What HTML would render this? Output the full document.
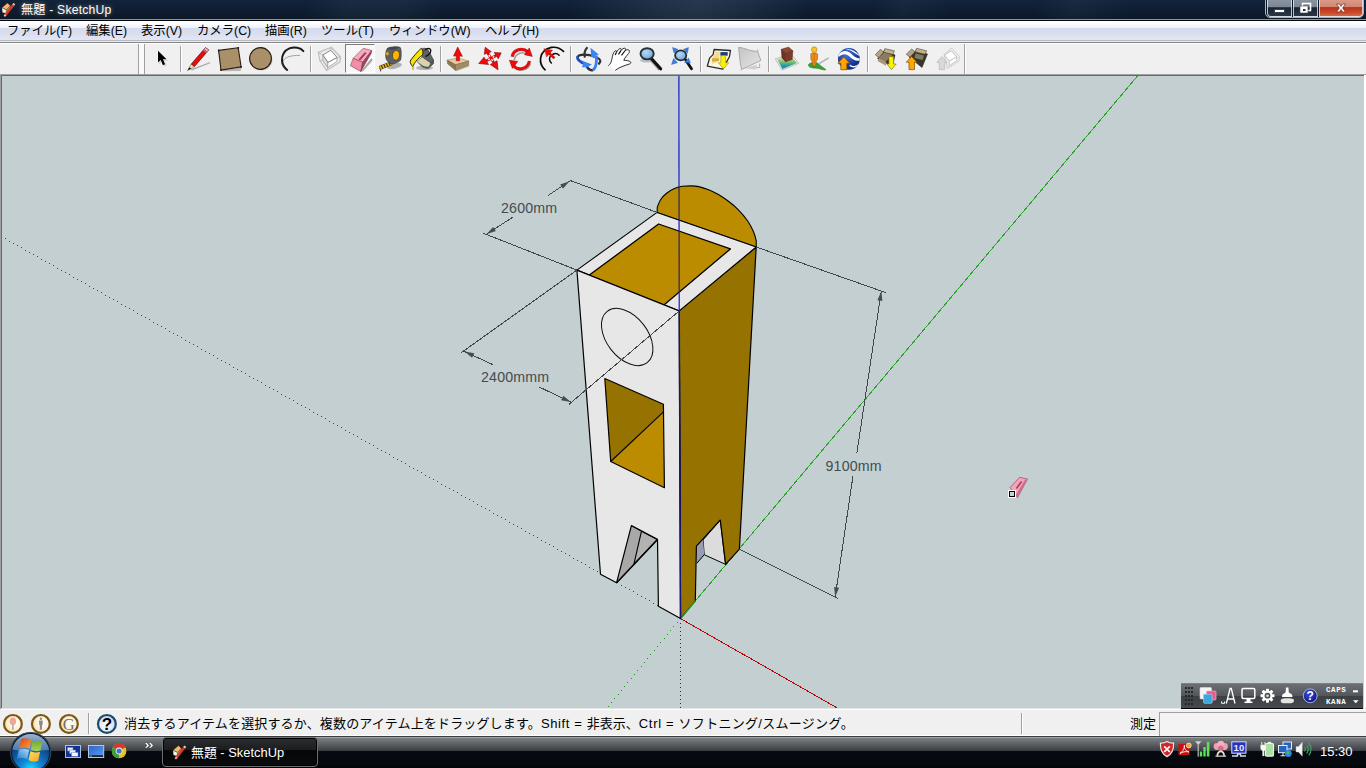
<!DOCTYPE html>
<html lang="ja">
<head>
<meta charset="utf-8">
<title>無題 - SketchUp</title>
<style>
*{box-sizing:border-box;margin:0;padding:0}
html,body{width:1366px;height:768px;overflow:hidden;background:#f0f0f0}
body{position:relative;font-family:"Liberation Sans","Noto Sans CJK JP",sans-serif;font-size:12px;color:#000}
.abs{position:absolute}
/* title bar */
#title{left:0;top:0;width:1366px;height:19px;background:
 linear-gradient(100deg,rgba(140,165,190,0) 300px,rgba(140,165,190,.07) 345px,rgba(140,165,190,.07) 395px,rgba(140,165,190,0) 440px,rgba(140,165,190,0) 560px,rgba(140,165,190,.13) 650px,rgba(140,165,190,.17) 690px,rgba(140,165,190,.10) 740px,rgba(140,165,190,0) 800px,rgba(140,165,190,0) 860px,rgba(140,165,190,.06) 890px,rgba(140,165,190,0) 940px,rgba(140,165,190,0) 1020px,rgba(140,165,190,.06) 1060px,rgba(140,165,190,0) 1120px),
 linear-gradient(180deg,#12233a 0,#0e1d31 55%,#0b1828 100%)}
#tline1{left:0;top:19px;width:1366px;height:1px;background:#8593a0}
#tline2{left:0;top:20px;width:1366px;height:1px;background:#05090e}
#ttext{left:21px;top:1px;height:19px;line-height:18px;font-size:12.2px;letter-spacing:.18px;color:#fff;white-space:nowrap;text-shadow:0 0 4px rgba(255,255,255,.55),0 0 2px rgba(0,0,0,.8)}
/* caption buttons */
#capwrap{left:1265px;top:-3px;width:99px;height:21px;border:1px solid #aab4c0;border-radius:0 0 5px 5px;background:#0c1826}
.cap{position:absolute;top:0;height:19px;border:1px solid rgba(235,240,248,.75);border-top:none}
#bmin{left:1px;width:25px;border-radius:0 0 0 4px;background:linear-gradient(180deg,#8b97a3 0,#7c8794 52%,#1a2433 53%,#2a3546 100%)}
#bmax{left:27px;width:25px;background:linear-gradient(180deg,#8b97a3 0,#7c8794 52%,#1a2433 53%,#2a3546 100%)}
#bcls{left:53px;width:44px;border-radius:0 0 4px 0;background:linear-gradient(180deg,#dba090 0,#d48573 50%,#b8341a 53%,#c9482a 80%,#d2694a 100%)}
/* menu */
#menu{left:0;top:21px;width:1366px;height:19px;background:linear-gradient(180deg,#ffffff 0,#fdfdff 2px,#eef1fa 7px,#d5daec 7.5px,#d9deef 12px,#e2e6f5 100%)}
#mline1{left:0;top:40px;width:1366px;height:1px;background:#b8bac2}
#mline0{left:0;top:41px;width:1366px;height:1px;background:#ececec}
#mline2{left:0;top:42px;width:1366px;height:1px;background:#858585}
#mline3{left:0;top:43px;width:1366px;height:1px;background:#ffffff}
.mi{position:absolute;top:1px;height:19px;line-height:19px;font-size:12.35px;white-space:nowrap;color:#000}
/* toolbar */
#tb{left:0;top:44px;width:1366px;height:30px;background:#f0f0f0}
.sep{position:absolute;top:5px;width:2px;height:24px;border-left:1px solid #a0a0a0;border-right:1px solid #fff}
.ic{position:absolute;top:3px;width:26px;height:26px}
/* viewport */
#vb1{left:0;top:74px;width:1366px;height:1px;background:#a0a0a0}
#vb2{left:1px;top:75px;width:1364px;height:1px;background:#696969}
#vbl1{left:0;top:74px;width:1px;height:635px;background:#a0a0a0}
#vbl2{left:1px;top:75px;width:1px;height:633px;background:#696969}
#vp{left:2px;top:76px;width:1362px;height:632px;background:#c4cfd1;overflow:hidden}
#vbr{left:1364px;top:75px;width:2px;height:636px;background:#fff}
#vbb{left:1px;top:708px;width:1365px;height:2px;background:linear-gradient(180deg,#e3e3e3 0,#e3e3e3 1px,#fff 1px,#fff 2px)}
/* status */
#status{left:0;top:710px;width:1366px;height:26px;background:#f0f0f0;border-bottom:1px solid #fff}
#stext{left:124px;top:714px;height:20px;line-height:20px;font-size:13px;white-space:nowrap;color:#000}
#mlabel{left:1130px;top:714px;height:20px;line-height:20px;font-size:13px;white-space:nowrap}
#mbox{left:1159px;top:712px;width:207px;height:24px;border-left:1px solid #a0a0a0;border-top:1px solid #a0a0a0;background:#f3f3f3}
.ssep{position:absolute;top:713px;width:2px;height:21px;border-left:1px solid #a0a0a0;border-right:1px solid #fff}
/* taskbar */
#task{left:0;top:736px;width:1366px;height:32px;background:linear-gradient(180deg,#3a3d40 0,#3a3d40 1px,#a2a5a8 1px,#a2a5a8 2px,#7c7f82 2px,#62666a 7px,#393d41 15px,#070b11 15px,#05080d 28px,#010203 100%)}
#tbtn{left:162px;top:737px;width:156px;height:30px;border:1px solid #6d7174;border-radius:4px;background:linear-gradient(180deg,#2b2e31 0,#1b1d20 42%,#050608 45%,#0a0b0d 100%);box-shadow:inset 0 0 0 1px #000}
#tbtxt{left:191px;top:743px;height:20px;line-height:20px;font-size:12.9px;color:#fff;white-space:nowrap}
#clock{left:1320px;top:742px;height:20px;line-height:20px;font-size:13px;color:#fff;white-space:nowrap}
#chev{left:144px;top:737px;font-size:12px;line-height:14px;color:#fff;font-weight:bold;letter-spacing:-1px}
/* language bar */
#lang{left:1181px;top:683px;width:182px;height:26px;border-top:1px solid #7d8083;border-bottom:1px solid #000;background:linear-gradient(180deg,#6c7074 0,#54585c 48%,#3c4043 50%,#46494d 100%)}
.lt{position:absolute;left:145px;font-size:7.5px;line-height:8px;color:#fff;font-weight:bold;letter-spacing:.6px;font-family:"Liberation Mono","DejaVu Sans Mono",monospace}
</style>
</head>
<body>
<!-- TITLE BAR -->
<div id="title" class="abs"></div>
<div id="tline1" class="abs"></div>
<div id="tline2" class="abs"></div>
<svg class="abs" style="left:0;top:0" width="18" height="19" viewBox="0 0 18 19">
 <polygon points="1.9,7.6 7.4,3 10.4,5.6 6.5,9.9" fill="#f3b877" stroke="#1a1410" stroke-width=".5"/>
 <polygon points="1.9,7.6 6.5,9.9 6,13.6 2.3,12.5" fill="#f5f3ee" stroke="#2a2420" stroke-width=".4"/>
 <polygon points="6.5,9.9 10.4,5.6 10.2,8.6 6,13.6" fill="#c98a58"/>
 <path d="M13.700 4.4 L5.300 15.1" stroke="#d53c25" stroke-width="2.5" fill="none"/>
 <path d="M14.300 3.6 L13.300 4.9" stroke="#f6d8d0" stroke-width="2.3" fill="none"/>
 <path d="M5.700 14.6 L4.300 16.3" stroke="#f3b3a3" stroke-width="1.9" fill="none"/>
</svg>
<div id="ttext" class="abs">無題 - SketchUp</div>
<div id="capwrap" class="abs">
 <div id="bmin" class="cap"></div><div id="bmax" class="cap"></div><div id="bcls" class="cap"></div>
</div>
<svg class="abs" style="left:1265px;top:0" width="99" height="18" viewBox="0 0 99 18">
 <rect x="9.5" y="9.5" width="10" height="3" fill="#fff" stroke="#3a4350" stroke-width="1"/>
 <rect x="37.5" y="3.5" width="8" height="7" fill="none" stroke="#fff" stroke-width="1.6"/>
 <rect x="35" y="6" width="8" height="7" fill="#fff" stroke="#3a4350" stroke-width=".6"/>
 <rect x="38" y="9" width="2.5" height="2" fill="#26303f"/>
 <path d="M71.500 4 L74.500 4 L76 6.5 L77.500 4 L80.500 4 L77.600 8 L80.500 12 L77.500 12 L76 9.5 L74.500 12 L71.500 12 L74.400 8 Z" fill="#fff" stroke="#6b2a1d" stroke-width=".7"/>
</svg>

<!-- MENU BAR -->
<div id="menu" class="abs">
 <span class="mi" style="left:7px">ファイル(F)</span>
 <span class="mi" style="left:86px">編集(E)</span>
 <span class="mi" style="left:141px">表示(V)</span>
 <span class="mi" style="left:197px">カメラ(C)</span>
 <span class="mi" style="left:265px">描画(R)</span>
 <span class="mi" style="left:321px">ツール(T)</span>
 <span class="mi" style="left:389px">ウィンドウ(W)</span>
 <span class="mi" style="left:485px">ヘルプ(H)</span>
</div>
<div id="mline1" class="abs"></div><div id="mline0" class="abs"></div><div id="mline2" class="abs"></div><div id="mline3" class="abs"></div>

<!-- TOOLBAR -->
<div id="tb" class="abs">
<div style="position:absolute;left:138px;top:0;width:1px;height:30px;background:#a0a0a0"></div>
<div style="position:absolute;left:139px;top:0;width:5px;height:30px;background:#f9f9f9"></div>
<div style="position:absolute;left:144px;top:0;width:1px;height:30px;background:#a0a0a0"></div>
<div class="sep" style="left:180px;top:2px;height:26px"></div>
<div class="sep" style="left:310px;top:2px;height:26px"></div>
<div class="sep" style="left:440px;top:2px;height:26px"></div>
<div class="sep" style="left:570px;top:2px;height:26px"></div>
<div class="sep" style="left:700px;top:2px;height:26px"></div>
<div class="sep" style="left:768px;top:2px;height:26px"></div>
<div class="sep" style="left:867px;top:2px;height:26px"></div>
<div class="sep" style="left:964px;top:0;height:30px"></div>
<div style="position:absolute;left:345px;top:0;width:30px;height:29px;border-left:1px solid #7c7c7c;border-top:1px solid #7c7c7c;border-right:1px solid #fff;border-bottom:1px solid #fff;background:
 repeating-conic-gradient(#ffffff 0 25%,#f0f0f0 0 50%) 0 0/2px 2px"></div>
<svg style="position:absolute;left:0;top:0" width="1366" height="30" viewBox="0 44 1366 30">
<defs>
 <linearGradient id="gTer" x1="0" y1="0" x2="1" y2="1"><stop offset="0" stop-color="#c4c4c4"/><stop offset="1" stop-color="#e6e6e6"/></linearGradient>
 <radialGradient id="gLens" cx=".4" cy=".35" r=".7"><stop offset="0" stop-color="#b8d8f4"/><stop offset="1" stop-color="#6fa4d8"/></radialGradient>
 <radialGradient id="gGE" cx=".4" cy=".3" r=".8"><stop offset="0" stop-color="#4a74d8"/><stop offset=".6" stop-color="#1a3a9c"/><stop offset="1" stop-color="#0d2470"/></radialGradient>
 <linearGradient id="gPhoto" x1="0" y1="0" x2="0" y2="1"><stop offset="0" stop-color="#f0e8c0"/><stop offset=".45" stop-color="#8ac070"/><stop offset=".75" stop-color="#20a0a0"/><stop offset="1" stop-color="#3070d0"/></linearGradient>
</defs>
<!-- 1 select -->
<g id="i-select">
 <path d="M159.200 52.3 L159.200 64.3 L162 61.7 L164.200 66.5 L166.600 65.5 L164.400 60.8 L168.200 60.8 Z" fill="#bdbdbd" opacity=".7"/>
 <path d="M158 50.8 L158 62.6 L160.700 60.1 L162.900 65.3 L165.100 64.3 L163 59.3 L166.600 59.3 Z" fill="#000" stroke="#fff" stroke-width="1" stroke-linejoin="round" paint-order="stroke"/>
</g>
<!-- 2 pencil -->
<g id="i-pencil">
 <path d="M190 69.5 L210 62 L210.300 63.2 L192 70.5 Z" fill="#9a9a9a" opacity=".75"/>
 <path d="M205.400 47.6 L208.800 50 L194.400 66.7 L191 64.3 Z" fill="#e0100c" stroke="#5a0a08" stroke-width=".6"/>
 <path d="M205.400 47.6 L208.800 50 L207.200 51.9 L203.800 49.5 Z" fill="#f7a8cc" stroke="#8a4868" stroke-width=".5"/>
 <path d="M203.800 49.5 L207.200 51.9 L206.300 53 L202.900 50.6 Z" fill="#8a8a7a"/>
 <path d="M191 64.3 L194.400 66.7 L187.600 70.5 Z" fill="#f0e2b4" stroke="#3a3020" stroke-width=".4"/>
 <path d="M187.600 70.5 L189.400 67.2 L191.200 68.5 Z" fill="#111"/>
</g>
<!-- 3 rectangle -->
<g id="i-rect">
 <path d="M222 70.6 L241.800 67.6 L240.500 71 L223 71.3 Z" fill="#9c9c9c" opacity=".7"/>
 <path d="M218.600 50.4 L238.200 47.7 L241.100 66.9 L221 70.1 Z" fill="#aa9069" stroke="#2c2118" stroke-width="1.1" stroke-linejoin="round"/>
 <circle cx="218.7" cy="50.5" r=".9" fill="#1a1410"/><circle cx="238.3" cy="47.8" r=".9" fill="#1a1410"/><circle cx="241.1" cy="66.9" r=".9" fill="#1a1410"/><circle cx="221" cy="70" r=".9" fill="#1a1410"/>
</g>
<!-- 4 circle -->
<g id="i-circle">
 <ellipse cx="261.4" cy="59.4" rx="11" ry="11" fill="#a8a8a8" opacity=".6"/>
 <circle cx="260.5" cy="58.5" r="10.9" fill="#aa9069" stroke="#241a12" stroke-width="1.1"/>
</g>
<!-- 5 arc -->
<g id="i-arc" fill="none" stroke-linecap="round">
 <path d="M282 63.5 C283 57.5 290 55.2 299.7 55.4" stroke="#8c8c8c" stroke-width=".8"/>
 <path d="M303.400 51.1 C300.500 47.6 294.5 46.6 289.4 48.4 C284.400 50.3 281.6 55.3 282 60.4 C282.300 64.4 284.3 67.9 287.2 70" stroke="#1a1a1a" stroke-width="2"/>
 <path d="M281.500 62 C282 65.5 283.6 68 285.8 69.6" stroke="#555" stroke-width=".7"/>
</g>
<!-- 6 make component (disabled) -->
<g id="i-comp" stroke-linejoin="round">
 <path d="M318.300 52.4 L331.300 47.3 L340.500 57 L340 62 L326.500 70.5 L319.800 60.5 Z" fill="#ececec" stroke="#c2c2c2" stroke-width="1.3"/>
 <path d="M322.900 55 L327.900 62.3 L327.600 67.6 L322.700 60.4 Z" fill="#dedede" stroke="#9a9a9a" stroke-width=".8"/>
 <path d="M327.900 62.3 L337.100 57.5 L336.900 61.5 L327.600 67.6 Z" fill="#ffffff" stroke="#9a9a9a" stroke-width=".8"/>
 <path d="M322.900 55 L330.800 50.2 L337.100 57.5 L327.900 62.3 Z" fill="#ffffff" stroke="#7c7c7c" stroke-width=".9"/>
 <path d="M318.300 52.4 L322.900 55 M331.300 47.3 L330.800 50.2 M340.500 57 L337.100 57.5 M326.500 70.5 L327.600 67.6 M319.800 60.5 L322.700 60.4" stroke="#bcbcbc" stroke-width="1" fill="none"/>
</g>
<!-- 7 eraser (active) -->
<g id="i-eraser" stroke-linejoin="round">
 <path d="M360.800 71.5 L371.600 58 L372.400 60.5 L363.300 71 Z" fill="#8e8e8e" opacity=".8"/>
 <path d="M353.100 58.4 L363.200 48.3 L371.700 50.5 L362.700 62.3 Z" fill="#f7a9bd" stroke="#8c3c55" stroke-width=".6"/>
 <path d="M353.100 58.4 L362.700 62.3 L360.800 71.5 L350.400 65.7 Z" fill="#f28ea6" stroke="#8c3c55" stroke-width=".6"/>
 <path d="M362.700 62.3 L371.700 50.5 L371.200 53.2 L360.800 71.5 Z" fill="#9c4660" stroke="#6c2c42" stroke-width=".5"/>
 <path d="M364.700 52.3 L366.700 52.9 L360.400 60.3 L358.400 59.6 Z" fill="#a23c5c"/>
</g>
<!-- 8 tape measure -->
<g id="i-tape">
 <ellipse cx="394.5" cy="66" rx="7.5" ry="2.8" fill="#9a9a9a" opacity=".75" transform="rotate(-12 394.5 66)"/>
 <path d="M379 66.2 L390.800 61.6 L392.300 64.7 L380.600 69.6 Z" fill="#f0b400" stroke="#4a3a10" stroke-width=".5"/>
 <path d="M381.300 65.3 L382.800 68.7 M383.800 64.3 L385.300 67.7 M386.300 63.4 L387.800 66.7 M388.800 62.4 L390.200 65.7" stroke="#1a1a1a" stroke-width="1" fill="none"/>
 <path d="M379 66 L380.700 69.7 L381.300 71.2 L380.300 71.4 Z" fill="#333"/>
 <path d="M387 48.8 C388.500 46.6 398.5 46.2 400.3 47.6 C401.700 49.8 401.3 58.8 400.5 60.3 C398.500 62.3 393.5 64.2 391.5 64 C389.300 63.5 386.5 60.5 386 58.5 C385.300 55.5 385.8 51 387 48.8 Z" fill="#5d6061" stroke="#2e3031" stroke-width=".6"/>
 <path d="M387 48.8 C388.500 46.6 398.5 46.2 400.3 47.6 L392.500 50 Z" fill="#44484a"/>
 <ellipse cx="396" cy="55.3" rx="3.5" ry="4.9" fill="#ffb400" stroke="#3a3a30" stroke-width=".7" transform="rotate(8 396 55.3)"/>
 <ellipse cx="387.4" cy="53.7" rx="1.4" ry="1.8" fill="#f0a800"/>
</g>
<!-- 9 paint bucket -->
<g id="i-paint">
 <ellipse cx="424.5" cy="67.8" rx="8.5" ry="2.3" fill="#9a9a9a" opacity=".7"/>
 <path d="M417 61.4 L422.300 57 L430.600 62.8 L433.400 60 L433.600 63.5 L428.500 68.2 C426 68.5 423 67.5 421.5 66 Z" fill="#56595b" stroke="#2a2c2d" stroke-width=".6"/>
 <path d="M417 61.4 L422.300 57 L430.600 62.8 L428.700 66.7 C426 67 423 66.2 421.5 64.8 Z" fill="#dad2ac"/>
 <path d="M421 49 C423 47.8 427 48 428 49.5 L433.600 60 L430.600 62.8 L422.300 57 L419 53 Z" fill="#606365" stroke="#2a2c2d" stroke-width=".5"/>
 <path d="M425 50.5 C426 47.5 430.5 47.6 430.8 50.5 C431 53 427.5 56 425.5 56.5" fill="none" stroke="#111" stroke-width="1.3"/>
 <path d="M421.300 48.3 C418 51 412.5 57.5 410.2 61 C410 63 411.5 65.5 412.7 66.5 C414.500 63 417 59 422.5 55 C423 53 423.5 50.5 421.3 48.3 Z" fill="#f5e400" stroke="#1c1a00" stroke-width=".9" stroke-linejoin="round"/>
 <path d="M412.700 66.5 C412.200 68 412.5 69.8 413.1 69.9 C413.700 69.8 413.8 68 413.4 66.7 Z" fill="#e8d800" stroke="#6a6000" stroke-width=".3"/>
</g>
<!-- 10 push/pull -->
<g id="i-push" stroke-linejoin="round">
 <path d="M455.300 70.3 L468.600 65.2 L470 66.2 L456.500 71.2 Z" fill="#9a9a9a" opacity=".6"/>
 <path d="M447.100 60.1 L457.900 57.9 L468.800 61.1 L455.500 64.7 Z" fill="#e8c89c" stroke="#7a6440" stroke-width=".4"/>
 <path d="M447.100 60.1 L455.500 64.7 L455.300 70.3 L447.600 63.8 Z" fill="#8a7853" stroke="#5a4a30" stroke-width=".4"/>
 <path d="M455.500 64.7 L468.800 61.1 L468.600 65.2 L455.300 70.3 Z" fill="#a38e62" stroke="#5a4a30" stroke-width=".4"/>
 <path d="M457.700 47 L462.400 56.3 L459.500 56.1 L459.500 60.8 L456.300 60.8 L456.300 56.1 L453.500 56.1 Z" fill="#f40808" stroke="#8a0404" stroke-width=".5"/>
</g>
<!-- 11 move -->
<g id="i-move" stroke-linejoin="round">
 <path d="M487.700 53 L493.700 62.6 M496.200 55.5 L486.300 60.8" stroke="#d80c0c" stroke-width="2.6" fill="none"/>
 <path d="M488.900 54.9 L490 56.7 M491.500 59.1 L492.600 60.9 M494.300 56.5 L492.600 57.4 M489.800 58.9 L488.100 59.8" stroke="#fff" stroke-width="1.3" fill="none"/>
 <path d="M485.200 47.3 L484.300 54.3 L491.300 51.7 Z" fill="#f20a0a" stroke="#7a0606" stroke-width=".6"/>
 <path d="M501.200 52.9 L494.200 52.4 L498.300 58.7 Z" fill="#f20a0a" stroke="#7a0606" stroke-width=".6"/>
 <path d="M478.700 63.5 L484 57.2 L488.600 64.5 Z" fill="#f20a0a" stroke="#7a0606" stroke-width=".6"/>
 <path d="M498 69.8 L490.300 64.5 L497.100 60.8 Z" fill="#f20a0a" stroke="#7a0606" stroke-width=".6"/>
</g>
<!-- 12 rotate -->
<g id="i-rotate" fill="none" stroke-linecap="butt">
 <path d="M513 58.5 C514 51.5 522 49 527.5 53.5" stroke="#9aa0a0" stroke-width="1.6" transform="translate(1.2 1.6)"/>
 <path d="M529.500 62 C527 69 519 70.5 514.5 66.5" stroke="#9aa0a0" stroke-width="1.6" transform="translate(1 1.4)"/>
 <path d="M512.300 56.8 C513.200 49.8 522.5 46.8 528 52" stroke="#e01010" stroke-width="3.2"/>
 <path d="M529.500 61 C527.500 69.5 518 71 513.5 65.8" stroke="#e01010" stroke-width="3.2"/>
 <path d="M529.300 48 L532.300 56.4 L524.500 54.7 Z" fill="#f20a0a" stroke="#8a0606" stroke-width=".5"/>
 <path d="M509.400 60.3 L517.800 61.4 L512.400 68.4 Z" fill="#f20a0a" stroke="#8a0606" stroke-width=".5"/>
</g>
<!-- 13 offset -->
<g id="i-offset" fill="none" stroke-linecap="round">
 <path d="M563.500 51.4 C560 48 555.5 46.8 551.5 47.4 C546 48.5 541.5 52.5 540.6 58.2 C540 62.5 541.8 67 545.1 69.8" stroke="#0a0a0a" stroke-width="1.7"/>
 <path d="M559.100 55.3 C557.500 53.6 555 53.3 553 54.2 C550.800 55.3 549.3 57.5 549.6 59.8 C549.800 61 550.5 62.2 551.4 63" stroke="#0a0a0a" stroke-width="1.5"/>
 <path d="M554.400 58.2 L549 53" stroke="#e01010" stroke-width="2.6" stroke-linecap="butt"/>
 <path d="M544.200 48.8 L552.500 50.2 L546.800 56.8 Z" fill="#f20a0a" stroke="#8a0606" stroke-width=".4"/>
</g>
<!-- 14 orbit -->
<g id="i-orbit" fill="none">
 <path d="M587.500 47.3 C584.500 50 583.8 54.5 585 57.5" stroke="#333" stroke-width="2.2"/>
 <path d="M577.500 57 C579 53.8 588 54 594 56.3 C598 57.8 600.6 59.8 600.3 61.5 L598.500 64.5" stroke="#2c3038" stroke-width="2.2"/>
 <path d="M577.500 56.5 C576.800 59.8 581 62.5 586 64.3" stroke="#1c4cc0" stroke-width="2.8"/>
 <path d="M586.500 66 C588 68.8 590.5 70.7 592.8 70" stroke="#333" stroke-width="2.6"/>
 <path d="M592.800 70 C595.800 68.5 597.2 62 596.2 55.5" stroke="#3a80f0" stroke-width="2.8"/>
 <path d="M590.500 47.8 L598.800 54.6 L595.300 55.6 L596 58.8 L591.300 57 Z" fill="#3a84f4"/>
 <path d="M581 60.3 L592 64.5 L587 67.2 L581.800 67.2 L583.500 63.8 Z" fill="#3a84f4"/>
</g>
<!-- 15 pan -->
<g id="i-pan">
 <path d="M608.300 65.7 C610.500 64.5 611.5 61.5 612 58.5 C612.500 55.5 613.3 52.2 615.3 50.8 C616.300 50.2 616.8 51.2 616.5 52.3 C617.500 50.5 619 48.5 620.5 48.4 C621.500 48.5 621.3 49.8 620.8 50.8 C622 49.2 623.8 47.8 625 48.2 C626 48.6 625.5 50 624.8 51 C626 50 627.8 49.2 628.8 50 C629.800 51 629.5 52.5 628.5 53.5 C626.500 56 624.5 58 623.8 60.3 C626 60.3 629.3 60.8 630.7 62 C631.200 62.8 630.6 63.6 629.5 64 C625.500 65.2 618.5 67.5 615.3 70.3 Z" fill="#ffffff" stroke="none"/>
 <path d="M608.300 65.7 C610.500 64.5 611.5 61.5 612 58.5 C612.500 55.5 613.3 52.2 615.3 50.8 C616.300 50.2 616.8 51.2 616.5 52.3 C617.500 50.5 619 48.5 620.5 48.4 C621.500 48.5 621.3 49.8 620.8 50.8 C622 49.2 623.8 47.8 625 48.2 C626 48.6 625.5 50 624.8 51 C626 50 627.8 49.2 628.8 50 C629.800 51 629.5 52.5 628.5 53.5 C626.500 56 624.5 58 623.8 60.3 C626 60.3 629.3 60.8 630.7 62 C631.200 62.8 630.6 63.6 629.5 64 C625.500 65.2 618.5 67.5 615.3 70.3" fill="none" stroke="#1a1a1a" stroke-width=".9" stroke-linejoin="round"/>
 <path d="M616.500 52.3 L615.200 55 M620.800 50.8 L618.500 54.3 M624.800 51 L621.500 55.3" stroke="#111" stroke-width="1.2" fill="none"/>
</g>
<!-- 16 zoom -->
<g id="i-zoom">
 <ellipse cx="646.5" cy="60.5" rx="6.5" ry="2" fill="#a0a0a0" opacity=".6"/>
 <path d="M651.600 58.8 L660.800 69" stroke="#9a9a9a" stroke-width="2" transform="translate(-1.5 .8)"/>
 <path d="M651.600 58.8 L660.600 68.8" stroke="#111" stroke-width="3.2" stroke-linecap="round"/>
 <ellipse cx="647.1" cy="53.8" rx="6.6" ry="5.6" fill="url(#gLens)" stroke="#22303a" stroke-width="1.9"/>
</g>
<!-- 17 zoom extents -->
<g id="i-zext">
 <path d="M685.500 59.8 L691.500 68.8" stroke="#111" stroke-width="2.8" stroke-linecap="round"/>
 <path d="M672.500 47.5 L678 49.3 L674 53 Z M688.500 47.5 L687.500 53.2 L683.500 49.3 Z M671.500 64.5 L673.500 58.5 L677.500 62.7 Z M690.500 62.8 L684.500 62.5 L688.500 58 Z" fill="#3a7ee0" stroke="#2a5eb0" stroke-width=".4"/>
 <ellipse cx="680.7" cy="55.4" rx="5.6" ry="5" fill="url(#gLens)" stroke="#22303a" stroke-width="1.8"/>
</g>
<!-- 18 add location -->
<g id="i-addloc" stroke-linejoin="round">
 <path d="M714.100 49.5 L730.500 50.5 L729.500 56.5 L722.800 69.1 L707.300 66.2 L709.700 57.9 L713.100 54.6 Z" fill="#fdf8dc" stroke="#2a2a32" stroke-width="1.3"/>
 <path d="M715 51.5 L720 51.8 L719 61 L712 64 L711.500 58.5 L714.300 55.5 Z" fill="#f1dc90"/>
 <path d="M712.300 58.3 L719.300 58.5 L719 61 L712 61.5 Z" fill="#d8a838"/>
 <rect x="720.4" y="52.1" width="7.3" height="3.6" fill="#1c3c7c"/>
 <path d="M720.800 55.6 L725.700 55.6 L725.700 62.7 L728.800 62.7 L723.300 68.9 L718.400 62.7 L720.800 62.7 Z" fill="#fbf000" stroke="#8a7c00" stroke-width=".5"/>
</g>
<!-- 19 toggle terrain (disabled) -->
<g id="i-terrain" stroke-linejoin="round">
 <path d="M745 68.5 L757 64.5 L756 69.5 Z" fill="#d0d0d0"/>
 <path d="M738.700 47.3 C745 48 752 52 757.6 51.2 C758.500 54.5 759.8 57.5 760.9 60.4 L741.600 69.5 C739.800 62 739.2 54 738.7 47.3 Z" fill="url(#gTer)" stroke="#a2a2a2" stroke-width=".9"/>
 <path d="M757.600 51.2 L758 49.5 M741.600 69.5 L740.500 70.5 M759.500 63.5 L759.800 67.5 L756.500 67.5" stroke="#a8a8a8" stroke-width=".9" fill="none"/>
</g>
<!-- 20 building maker / photo -->
<g id="i-photo" stroke-linejoin="round">
 <path d="M775.300 58.8 L791.400 54.4 L798.700 63.2 L781.900 70.2 Z" fill="#f4f4f0" stroke="#8a8a8a" stroke-width=".5"/>
 <path d="M777 59.3 L790.800 55.6 L796.900 62.9 L782.400 68.9 Z" fill="url(#gPhoto)"/>
 <path d="M781.200 49.3 L788.500 47.1 L792.900 50.8 L785.700 53.2 Z" fill="#8e4a34" stroke="#4a2016" stroke-width=".4"/>
 <path d="M781.200 49.3 L785.700 53.2 L785.600 61.8 L781.900 57.7 Z" fill="#6e3020" stroke="#4a2016" stroke-width=".4"/>
 <path d="M785.700 53.2 L792.900 50.8 L792.200 59.6 L785.600 61.8 Z" fill="#7c3a28" stroke="#4a2016" stroke-width=".4"/>
</g>
<!-- 21 photo textures / person -->
<g id="i-person">
 <path d="M818.500 63 L828.300 57.3 L828.800 58.8 L819.500 64.2 Z" fill="#9a9a9a" opacity=".7"/>
 <path d="M808.400 65.3 C808.400 63.5 811.5 62.3 814.5 62.5 C817.500 62.7 819 64 820.5 65.5 C822.500 67.3 825.5 68.8 825.8 69.7 C825 70.5 821 69.3 818.5 68.5 C814.500 68.3 808.6 68 808.4 65.3 Z" fill="#3aa232" stroke="#1a6a18" stroke-width=".5"/>
 <path d="M810.700 54 C811 52.8 817.3 52.8 817.7 54 L817.300 60 L816.300 60.2 L815.800 66 L812.500 66 L812 60.2 L811 60 Z" fill="#f08c14" stroke="#8a4a08" stroke-width=".5"/>
 <path d="M814.200 53.5 L814.200 65.5" stroke="#c06808" stroke-width=".6"/>
 <ellipse cx="814.2" cy="49.7" rx="2.7" ry="2.9" fill="#ffc224" stroke="#9a6a08" stroke-width=".5"/>
</g>
<!-- 22 google earth -->
<g id="i-ge">
 <circle cx="848.9" cy="58.9" r="10.9" fill="url(#gGE)"/>
 <path d="M839 54.5 C843 49.5 848 50.5 852 54.5 C855 57.5 857.5 58.5 859.6 58.2 L859.700 60.5 C856 61.5 852.5 59.5 849.5 56.5 C846 53.2 842.5 53.5 838.7 57 Z" fill="#ffffff"/>
 <path d="M846 49.3 C850 48.3 855 51 858.7 54.5 L859.300 56 C855 53.5 851 50 846 49.3 Z" fill="#e8eefc"/>
 <path d="M850 64.5 C853 66.8 856 66.3 858.5 64 L857.500 65.8 C855 68 852 68 849.5 66 Z" fill="#ffffff"/>
 <path d="M843.800 56.8 L849.600 63.3 L846.800 63.3 L846.800 69.7 L840.800 69.7 L840.800 63.3 L837.900 63.3 Z" fill="#ffa400" stroke="#7a4a00" stroke-width=".7" stroke-linejoin="round"/>
</g>
<!-- 23 get models -->
<g id="i-get" stroke-linejoin="round">
 <path d="M877.500 58.5 L892.500 66.5 L895 55 L884.500 50.3 Z" fill="#3a362a" stroke="#1c1a14" stroke-width=".5"/>
 <path d="M875.300 54.8 L880.400 49.3 L883.700 51.9 L879 57.7 Z" fill="#b5a483" stroke="#3a3222" stroke-width=".5"/>
 <path d="M884.800 48.6 L894.400 50.8 L892.900 54.5 L883.700 52.3 Z" fill="#c2b08c" stroke="#3a3222" stroke-width=".5"/>
 <path d="M879 57.7 L884 52.5 L892.500 55 L886 61.5 Z" fill="#8a7c60"/>
 <path d="M877.500 61 L886 65.8 L886 61.5 L879 57.7 Z" fill="#a8977a"/>
 <path d="M888.900 56.6 L893.600 56.6 L893.600 64 L896.200 64 L891.400 69.7 L887 64 L888.900 64 Z" fill="#fbf000" stroke="#7c7000" stroke-width=".6"/>
</g>
<!-- 24 share model -->
<g id="i-share" stroke-linejoin="round">
 <path d="M909 57 L922 67.5 L927.500 54 L916.500 50 Z" fill="#3a362a" stroke="#1c1a14" stroke-width=".5"/>
 <path d="M906.200 54.3 L911.700 49 L915 51.7 L910 57.2 Z" fill="#b5a483" stroke="#3a3222" stroke-width=".5"/>
 <path d="M916.500 48.3 L926.700 50.8 L925 54.3 L915.300 51.9 Z" fill="#c2b08c" stroke="#3a3222" stroke-width=".5"/>
 <path d="M915.500 53.5 L924 55.5 L922.500 60 L914.500 58 Z" fill="#7c7c64"/>
 <path d="M911.600 56.4 L916.900 62.2 L914.500 62.2 L914.500 69.6 L909 69.6 L909 62.2 L906.300 62.2 Z" fill="#ffa400" stroke="#7a4a00" stroke-width=".7"/>
</g>
<!-- 25 share component (disabled) -->
<g id="i-sharec" stroke-linejoin="round">
 <path d="M944 54.5 L951.500 48 L959.500 56.5 L959 61 L947.500 68.5 Z" fill="#ececec" stroke="#cfcfcf" stroke-width="1"/>
 <path d="M944.500 55 L951.300 50.8 L956.800 57 L949.300 61 Z" fill="#fff" stroke="#b0b0b0" stroke-width=".7"/>
 <path d="M949.300 61 L956.800 57 L956.500 60.8 L949 65.8 Z" fill="#fff" stroke="#b8b8b8" stroke-width=".7"/>
 <path d="M941.900 56.5 L947 62.4 L944.700 62.4 L944.700 69.6 L939.300 69.6 L939.300 62.4 L936.800 62.4 Z" fill="#d8d8d8" stroke="#bcbcbc" stroke-width=".8"/>
</g>
</svg>

</div>

<!-- VIEWPORT -->
<div id="vb1" class="abs"></div><div id="vb2" class="abs"></div>
<div id="vbl1" class="abs"></div><div id="vbl2" class="abs"></div>
<div id="vbr" class="abs"></div><div id="vbb" class="abs"></div>
<div id="vp" class="abs">
<svg width="1362" height="633" viewBox="2 76 1362 633" style="position:absolute;left:0;top:0;font-family:'Liberation Sans',sans-serif">
<path d="M677 616h1v1h-1zM673 614h1v1h-1zM669 612h1v1h-1zM665 609h1v1h-1zM661 607h1v1h-1zM657 605h1v1h-1zM653 603h1v1h-1zM649 600h1v1h-1zM645 598h1v1h-1zM641 596h1v1h-1zM637 594h1v1h-1zM633 591h1v1h-1zM629 589h1v1h-1zM625 587h1v1h-1zM621 585h1v1h-1zM617 582h1v1h-1zM613 580h1v1h-1zM609 578h1v1h-1zM605 576h1v1h-1zM601 573h1v1h-1zM597 571h1v1h-1zM593 569h1v1h-1zM589 567h1v1h-1zM585 564h1v1h-1zM581 562h1v1h-1zM577 560h1v1h-1zM573 558h1v1h-1zM569 555h1v1h-1zM565 553h1v1h-1zM561 551h1v1h-1zM557 549h1v1h-1zM553 546h1v1h-1zM549 544h1v1h-1zM545 542h1v1h-1zM541 540h1v1h-1zM537 537h1v1h-1zM533 535h1v1h-1zM529 533h1v1h-1zM525 531h1v1h-1zM521 528h1v1h-1zM517 526h1v1h-1zM513 524h1v1h-1zM509 522h1v1h-1zM505 519h1v1h-1zM501 517h1v1h-1zM497 515h1v1h-1zM493 513h1v1h-1zM489 510h1v1h-1zM485 508h1v1h-1zM481 506h1v1h-1zM477 504h1v1h-1zM473 501h1v1h-1zM469 499h1v1h-1zM465 497h1v1h-1zM461 495h1v1h-1zM457 492h1v1h-1zM453 490h1v1h-1zM449 488h1v1h-1zM445 486h1v1h-1zM441 484h1v1h-1zM437 481h1v1h-1zM433 479h1v1h-1zM429 477h1v1h-1zM425 475h1v1h-1zM421 472h1v1h-1zM417 470h1v1h-1zM413 468h1v1h-1zM409 466h1v1h-1zM405 463h1v1h-1zM401 461h1v1h-1zM397 459h1v1h-1zM393 457h1v1h-1zM389 454h1v1h-1zM385 452h1v1h-1zM381 450h1v1h-1zM377 448h1v1h-1zM373 445h1v1h-1zM369 443h1v1h-1zM365 441h1v1h-1zM361 439h1v1h-1zM357 436h1v1h-1zM353 434h1v1h-1zM349 432h1v1h-1zM345 430h1v1h-1zM341 427h1v1h-1zM337 425h1v1h-1zM333 423h1v1h-1zM329 421h1v1h-1zM325 418h1v1h-1zM321 416h1v1h-1zM317 414h1v1h-1zM313 412h1v1h-1zM309 409h1v1h-1zM305 407h1v1h-1zM301 405h1v1h-1zM297 403h1v1h-1zM293 400h1v1h-1zM289 398h1v1h-1zM285 396h1v1h-1zM281 394h1v1h-1zM277 391h1v1h-1zM273 389h1v1h-1zM269 387h1v1h-1zM265 385h1v1h-1zM261 382h1v1h-1zM257 380h1v1h-1zM253 378h1v1h-1zM249 376h1v1h-1zM245 373h1v1h-1zM241 371h1v1h-1zM237 369h1v1h-1zM233 367h1v1h-1zM229 364h1v1h-1zM225 362h1v1h-1zM221 360h1v1h-1zM217 358h1v1h-1zM213 355h1v1h-1zM209 353h1v1h-1zM205 351h1v1h-1zM201 349h1v1h-1zM197 346h1v1h-1zM193 344h1v1h-1zM189 342h1v1h-1zM185 340h1v1h-1zM181 337h1v1h-1zM177 335h1v1h-1zM173 333h1v1h-1zM169 331h1v1h-1zM165 328h1v1h-1zM161 326h1v1h-1zM157 324h1v1h-1zM153 322h1v1h-1zM149 319h1v1h-1zM145 317h1v1h-1zM141 315h1v1h-1zM137 313h1v1h-1zM133 310h1v1h-1zM129 308h1v1h-1zM125 306h1v1h-1zM121 304h1v1h-1zM117 301h1v1h-1zM113 299h1v1h-1zM109 297h1v1h-1zM105 295h1v1h-1zM101 292h1v1h-1zM97 290h1v1h-1zM93 288h1v1h-1zM89 286h1v1h-1zM85 283h1v1h-1zM81 281h1v1h-1zM77 279h1v1h-1zM73 277h1v1h-1zM69 274h1v1h-1zM65 272h1v1h-1zM61 270h1v1h-1zM57 268h1v1h-1zM53 265h1v1h-1zM49 263h1v1h-1zM45 261h1v1h-1zM41 259h1v1h-1zM37 256h1v1h-1zM33 254h1v1h-1zM29 252h1v1h-1zM25 250h1v1h-1zM21 247h1v1h-1zM17 245h1v1h-1zM13 243h1v1h-1zM9 241h1v1h-1zM5 238h1v1h-1z" fill="#a81818" stroke="none"/>
<path d="M677 622h1v1h-1zM673 626h1v1h-1zM670 630h1v1h-1zM667 634h1v1h-1zM664 638h1v1h-1zM660 642h1v1h-1zM657 646h1v1h-1zM654 650h1v1h-1zM650 654h1v1h-1zM647 658h1v1h-1zM644 662h1v1h-1zM641 666h1v1h-1zM637 670h1v1h-1zM634 674h1v1h-1zM631 678h1v1h-1zM627 682h1v1h-1zM624 686h1v1h-1zM621 690h1v1h-1zM618 694h1v1h-1zM614 698h1v1h-1zM611 702h1v1h-1zM608 706h1v1h-1z" fill="#1f9a1f" stroke="none"/>
<path d="M680 623h1v1h-1zM680 627h1v1h-1zM680 631h1v1h-1zM680 635h1v1h-1zM680 639h1v1h-1zM680 643h1v1h-1zM680 647h1v1h-1zM680 651h1v1h-1zM680 655h1v1h-1zM680 659h1v1h-1zM680 663h1v1h-1zM680 667h1v1h-1zM680 671h1v1h-1zM680 675h1v1h-1zM680 679h1v1h-1zM680 683h1v1h-1zM680 687h1v1h-1zM680 691h1v1h-1zM680 695h1v1h-1zM680 699h1v1h-1zM680 703h1v1h-1zM680 707h1v1h-1z" fill="#1c1cc8" stroke="none"/>
<g fill="none" stroke-width="1" shape-rendering="crispEdges">
<line x1="680.5" y1="618.6" x2="1142.5" y2="70" stroke="#2aa52a" stroke-width="1"/>
<line x1="680.5" y1="618.6" x2="844.4" y2="712" stroke="#b40808" stroke-width="1"/>
</g>
<path d="M657.1 212.4 L657.3 206.9 C657.9 205.7 659.2 201.8 660.7 199.5 C662.2 197.2 664.3 195 666.6 193.2 C668.9 191.4 671.8 189.8 674.4 188.6 C677 187.4 679.4 186.8 682.2 186.3 C685 185.9 688.2 185.9 691 185.9 C693.8 185.9 695.9 185.9 698.8 186.6 C701.7 187.2 705.3 188.5 708.6 189.8 C711.9 191.1 715.1 192.7 718.4 194.6 C721.6 196.5 724.9 198.6 728.1 201 C731.4 203.4 734.6 206 737.9 209.3 C741.2 212.6 745.1 217.2 747.7 221 C750.3 224.8 752.1 228.6 753.5 231.8 C754.9 235.1 755.8 239.1 756.2 240.5 L756.2 247 Z" fill="#bb8c00" stroke="#000" stroke-width="1.1" stroke-linejoin="round"/>
<polygon points="720.3,520 725.6,564.4 704.2,554.7 703.1,539.8" fill="#dcdcdc" stroke="#000" stroke-width="1" stroke-linejoin="round"/>
<polygon points="696.4,546.1 703.1,539.8 704.2,554.7 696.9,563.3" fill="#9a9cb4" stroke="none"/>
<polyline points="704.2,554.7 696.9,563.3" fill="none" stroke="#000" stroke-width="1"/>
<polygon points="679.2,310.9 756.2,247 739.4,549.2 725.6,564.4 720.3,520 696.4,546.1 695.3,600.8 680.5,618.6" fill="#967300" stroke="#000" stroke-width="1.2" stroke-linejoin="round"/>
<line x1="680.5" y1="618.6" x2="695.6" y2="600.5" stroke="#2aa02a" stroke-width="1.2"/>
<polygon points="576.9,270.1 679.2,310.9 756.2,247 657.1,212.4" fill="#e7e7e7" stroke="#000" stroke-width="1.1" stroke-linejoin="round"/>
<polygon points="589,275.3 663.9,305.1 730.4,248.9 658.6,224" fill="#bb8c00" stroke="#000" stroke-width="1.3" stroke-linejoin="round"/>
<polygon points="631.4,525.6 657.5,539.4 616.6,582.7" fill="#b2b2b2" stroke="#000" stroke-width="1.2" stroke-linejoin="round"/>
<polygon points="631.4,525.6 641.3,531.9 633.8,564.7 616.6,582.7" fill="#a8a8a8" stroke="none"/>
<line x1="641.3" y1="531.9" x2="633.8" y2="564.7" stroke="#000" stroke-width="1.1"/>
<line x1="657.5" y1="539.4" x2="616.6" y2="582.7" stroke="#000" stroke-width="1.5"/>
<polygon points="576.9,270.1 679.2,310.9 680.5,618.6 658.4,606.3 657.5,539.4 631.4,525.6 616.6,582.7 600.5,574.2" fill="#e7e7e7" stroke="#000" stroke-width="1.2" stroke-linejoin="round"/>
<polygon points="604.8,378.5 663.4,404.3 663.5,411.9 610.7,461.5" fill="#967300"/>
<polygon points="663.5,411.9 664.4,487.7 610.7,461.5" fill="#bb8c00"/>
<polygon points="604.8,378.5 663.4,404.3 664.4,487.7 610.7,461.5" fill="none" stroke="#000" stroke-width="1.2" stroke-linejoin="round"/>
<line x1="663.5" y1="411.9" x2="610.7" y2="461.5" stroke="#000" stroke-width="1.1"/>
<ellipse cx="627.2" cy="337" rx="32.5" ry="20.5" transform="rotate(52 627.2 337)" fill="none" stroke="#111" stroke-width="1"/>
<line x1="678.9" y1="70" x2="679" y2="186" stroke="#1212c4" stroke-width="1.15"/>
<line x1="679" y1="186" x2="679.05" y2="220" stroke="#33205c" stroke-width="1.2"/>
<line x1="679.05" y1="220" x2="679.08" y2="231.3" stroke="#1a1ac4" stroke-width="1.2"/>
<line x1="679.08" y1="231.3" x2="679.2" y2="293.5" stroke="#33205c" stroke-width="1.2"/>
<line x1="679.2" y1="293.5" x2="679.25" y2="311" stroke="#1a1ac4" stroke-width="1.2"/>
<line x1="679.25" y1="311" x2="680.5" y2="618.6" stroke="#17137c" stroke-width="1.4"/>
<g stroke="#41474a" stroke-width="1" fill="none" shape-rendering="crispEdges">
<line x1="569.6" y1="180.3" x2="657.1" y2="212.4"/>
<line x1="483" y1="233.1" x2="576.9" y2="270.1"/>
<line x1="569.5" y1="181.2" x2="548.2" y2="195.4"/>
<line x1="486.5" y1="234.2" x2="512.8" y2="217.2"/>
<line x1="576.9" y1="270.1" x2="461.5" y2="352.5"/>
<line x1="679.2" y1="310.9" x2="569" y2="404.3"/>
<line x1="464.5" y1="351.5" x2="492.7" y2="364.6"/>
<line x1="539.4" y1="387.1" x2="570.8" y2="402"/>
<line x1="756.2" y1="247" x2="886" y2="292.7"/>
<line x1="739.4" y1="549.2" x2="838" y2="598.5"/>
<line x1="881.3" y1="291.2" x2="856.8" y2="453.5"/>
<line x1="852.9" y1="476.5" x2="835.2" y2="596.8"/>
</g>
<polygon points="569.5,181.2 563,188.5 560.2,184.4" fill="#454c4f" stroke="none"/>
<polygon points="486.5,234.2 493.1,226.9 495.8,231.1" fill="#454c4f" stroke="none"/>
<polygon points="464.5,351.5 474.2,353.2 472.1,357.8" fill="#454c4f" stroke="none"/>
<polygon points="570.8,402 561.1,400.2 563.3,395.7" fill="#454c4f" stroke="none"/>
<polygon points="881.3,291.2 882.4,301 877.4,300.2" fill="#454c4f" stroke="none"/>
<polygon points="835.2,596.8 834.1,587 839.1,587.8" fill="#454c4f" stroke="none"/>
<g fill="#454c4f" font-size="14.2px" letter-spacing=".18">
<text x="501" y="213.3">2600mm</text>
<text x="481" y="382.2">2400mmm</text>
<text x="825.5" y="471.3">9100mm</text>
</g>
<polygon points="1019.6,477.3 1027.5,479.1 1017.6,497.5 1010,487.6" fill="#f5a3b8" stroke="#a8566c" stroke-width=".8" stroke-linejoin="round"/>
<polygon points="1025,480 1027.5,479.1 1017.6,497.5 1015.5,495.5" fill="#c9708a"/>
<line x1="1021.5" y1="481.5" x2="1016.5" y2="488.5" stroke="#a2405e" stroke-width="1.6"/>
<rect x="1008" y="490" width="8" height="8" fill="#fff" shape-rendering="crispEdges"/>
<rect x="1009" y="491" width="6" height="6" fill="#000" shape-rendering="crispEdges"/>
<rect x="1010" y="492" width="4" height="4" fill="#c9d4d5" shape-rendering="crispEdges"/>
</svg>
</div>

<!-- LANGUAGE BAR -->
<div id="lang" class="abs">
<svg style="position:absolute;left:0;top:-1px" width="182" height="26" viewBox="1181 683 182 26">
<defs>
 <radialGradient id="gQ" cx=".4" cy=".35" r=".7"><stop offset="0" stop-color="#3a4ad8"/><stop offset="1" stop-color="#0a1488"/></radialGradient>
</defs>
<!-- gripper dots -->
<g fill="#25282b">
 <rect x="1185" y="687" width="2" height="2"/><rect x="1188" y="687" width="2" height="2"/><rect x="1191" y="687" width="2" height="2"/>
 <rect x="1185" y="691" width="2" height="2"/><rect x="1188" y="691" width="2" height="2"/><rect x="1191" y="691" width="2" height="2"/>
 <rect x="1185" y="695" width="2" height="2"/><rect x="1188" y="695" width="2" height="2"/><rect x="1191" y="695" width="2" height="2"/>
 <rect x="1185" y="699" width="2" height="2"/><rect x="1188" y="699" width="2" height="2"/><rect x="1191" y="699" width="2" height="2"/>
 <rect x="1185" y="703" width="2" height="2"/><rect x="1188" y="703" width="2" height="2"/><rect x="1191" y="703" width="2" height="2"/>
</g>
<!-- windows icon -->
<rect x="1200" y="687.5" width="11.5" height="11.5" rx="1" fill="#f4f4f6" stroke="#d8d8de" stroke-width=".6"/>
<rect x="1206.5" y="691" width="9.5" height="9" rx="1" fill="#ef5a8c" stroke="#f8a8c4" stroke-width=".7"/>
<rect x="1203.5" y="694.3" width="8.7" height="9" rx="1" fill="#3aa6dc" stroke="#8cd0f0" stroke-width=".7"/>
<!-- _A -->
<path d="M1221.600 701.5 L1221.600 703.3 L1224.600 703.3 L1224.600 701.5" fill="none" stroke="#fff" stroke-width="1"/>
<path d="M1226.300 703.5 L1230.100 688.5 L1231.300 688.5 L1235 703.5 M1227.800 699 L1233.700 699" fill="none" stroke="#fff" stroke-width="1.3"/>
<!-- monitor -->
<rect x="1242" y="688.5" width="12.8" height="10" rx="1.2" fill="none" stroke="#fff" stroke-width="1.5"/>
<path d="M1244.500 702.3 L1252.500 702.3" stroke="#fff" stroke-width="1.5"/>
<path d="M1246.500 699 L1250.500 699 L1250.500 702 L1246.500 702 Z" fill="#fff"/>
<!-- gear -->
<g transform="translate(1267.5 695.7)">
 <g fill="#fff">
  <rect x="-1.5" y="-7" width="3" height="14" rx=".6"/>
  <rect x="-1.5" y="-7" width="3" height="14" rx=".6" transform="rotate(45)"/>
  <rect x="-1.5" y="-7" width="3" height="14" rx=".6" transform="rotate(90)"/>
  <rect x="-1.5" y="-7" width="3" height="14" rx=".6" transform="rotate(135)"/>
  <circle r="5"/>
 </g>
 <circle r="2.9" fill="#4a4e52"/><circle r="1.3" fill="#e8e8e8"/>
</g>
<!-- cone / brush -->
<path d="M1286 687.5 L1288.400 687.5 L1288.800 692.5 L1292 694.5 L1292.500 697 L1282 697 L1282.400 694.5 L1285.600 692.5 Z" fill="#fff"/>
<path d="M1281 699.5 C1282 697.8 1292.5 697.8 1293.8 699.5 C1294.500 701.5 1293.5 703 1291 703.3 L1283 703.3 C1280.800 703 1280.3 701.3 1281 699.5 Z" fill="#e4e4e4"/>
<!-- help -->
<circle cx="1310.2" cy="695.8" r="6.9" fill="url(#gQ)" stroke="#c8ccf0" stroke-width=".8"/>
<text x="1310.2" y="700.3" text-anchor="middle" font-family="'Liberation Sans',sans-serif" font-weight="bold" font-size="12" fill="#fff">?</text>
<!-- minimize and arrow -->
<rect x="1353" y="690.3" width="5" height="2" fill="#fff"/>
<path d="M1353 700.3 L1358.600 700.3 L1355.800 703.3 Z" fill="#fff"/>
</svg>

 <span class="lt" style="top:2px">CAPS</span>
 <span class="lt" style="top:14px">KANA</span>
</div>

<!-- STATUS BAR -->
<div id="status" class="abs"></div>
<svg class="abs" style="left:0;top:711px" width="124" height="26" viewBox="0 711 124 26">
<defs>
 <radialGradient id="gCr" cx=".6" cy=".45" r=".65"><stop offset="0" stop-color="#ffffff"/><stop offset=".55" stop-color="#fbf1d8"/><stop offset="1" stop-color="#f0d9a4"/></radialGradient>
 <radialGradient id="gHp" cx=".45" cy=".6" r=".7"><stop offset="0" stop-color="#ffffff"/><stop offset=".6" stop-color="#d4e6fa"/><stop offset="1" stop-color="#9cc0ea"/></radialGradient>
</defs>
<circle cx="12.9" cy="723.9" r="8.9" fill="url(#gCr)" stroke="#7c5612" stroke-width="2.2"/>
<circle cx="40.9" cy="723.9" r="8.9" fill="url(#gCr)" stroke="#7c5612" stroke-width="2.2"/>
<circle cx="68.9" cy="723.9" r="8.9" fill="url(#gCr)" stroke="#7c5612" stroke-width="2.2"/>
<path d="M12.300 724 L13.500 724 L13.700 729.8 L12.100 729.8 Z" fill="#a8a294"/>
<ellipse cx="12.9" cy="721.3" rx="2.9" ry="3.5" fill="#f3a79a" stroke="#d88a80" stroke-width=".5"/>
<circle cx="40.9" cy="718.8" r="1.2" fill="#8a8a88"/>
<path d="M39 720.6 L42.800 720.6 L42.600 725 L42 725 L41.900 729.8 L39.900 729.8 L39.800 725 L39.200 725 Z" fill="#8a8a88"/>
<text x="68.8" y="729.7" font-family="'Liberation Serif',serif" font-size="16.5" fill="#6e6e66" text-anchor="middle">G</text>
<circle cx="106.9" cy="723.9" r="8.9" fill="url(#gHp)" stroke="#1d4a6c" stroke-width="2.2"/>
<text x="107" y="730.2" font-family="'Liberation Sans',sans-serif" font-weight="bold" font-size="17" fill="#000" text-anchor="middle">?</text>
</svg>

<div class="ssep" style="left:88px"></div>
<div id="stext" class="abs"><span style="letter-spacing:.16px">消去するアイテムを選択するか、複数のアイテム上をドラッグします。</span><span style="letter-spacing:.62px">Shift = </span><span>非表示、</span><span style="letter-spacing:.68px">Ctrl = </span><span style="letter-spacing:.29px">ソフトニング/スムージング。</span></div>
<div class="ssep" style="left:1021px"></div>
<div id="mlabel" class="abs">測定</div>
<div id="mbox" class="abs"></div>

<!-- TASKBAR -->
<div id="task" class="abs"></div>
<div id="tbtn" class="abs"></div>
<div id="tbtxt" class="abs">無題 - SketchUp</div>
<div id="clock" class="abs">15:30</div>
<svg class="abs" style="left:0;top:728px" width="1366" height="40" viewBox="0 728 1366 40">
<defs>
 <radialGradient id="gOrbB" cx=".5" cy=".95" r=".75"><stop offset="0" stop-color="#18e4ff"/><stop offset=".35" stop-color="#1488d8"/><stop offset=".8" stop-color="#0d4f96"/><stop offset="1" stop-color="#0a3c78"/></radialGradient>
 <linearGradient id="gOrbT" x1="0" y1="0" x2="0" y2="1"><stop offset="0" stop-color="#c8d8e6" stop-opacity=".95"/><stop offset="1" stop-color="#7fa6c8" stop-opacity=".55"/></linearGradient>
 <linearGradient id="gR" x1="0" y1="0" x2="1" y2="1"><stop offset="0" stop-color="#e0401c"/><stop offset="1" stop-color="#f6a838"/></linearGradient>
 <linearGradient id="gG" x1="0" y1="0" x2="0" y2="1"><stop offset="0" stop-color="#6cae2c"/><stop offset="1" stop-color="#a8d060"/></linearGradient>
 <linearGradient id="gB" x1="1" y1="0" x2="0" y2="1"><stop offset="0" stop-color="#b0dcf4"/><stop offset="1" stop-color="#1c7cd0"/></linearGradient>
 <linearGradient id="gY" x1="0" y1="0" x2="1" y2="1"><stop offset="0" stop-color="#fde060"/><stop offset="1" stop-color="#f8a420"/></linearGradient>
 <linearGradient id="gDesk" x1="0" y1="0" x2="1" y2="1"><stop offset="0" stop-color="#2c62c8"/><stop offset="1" stop-color="#5c9cf0"/></linearGradient>
 <clipPath id="cOrb"><circle cx="30.7" cy="752.6" r="18.6"/></clipPath>
</defs>
<!-- start orb -->
<circle cx="30.7" cy="752.6" r="20.6" fill="#0b1c2c"/>
<circle cx="30.7" cy="752.6" r="20.1" fill="none" stroke="#5a6872" stroke-width=".8" opacity=".7"/>
<circle cx="30.7" cy="752.6" r="18.6" fill="url(#gOrbB)"/>
<path d="M11 728 L52 728 L52 749.3 C44 751.3 18 751.3 11 749.3 Z" fill="url(#gOrbT)" clip-path="url(#cOrb)"/>
<path d="M20.900 739.2 C24 737.6 28 738 31.4 739.8 L29.500 748.8 C26.500 747.3 22.5 747 19.2 748.5 Z" fill="url(#gR)"/>
<path d="M32.800 740.5 C36 742.2 39.5 742.4 42.6 741 L40.500 750.3 C37.500 751.7 33.8 751.3 30.8 749.5 Z" fill="url(#gG)"/>
<path d="M18.800 749.9 C22 748.4 26 748.7 29.1 750.3 L27.200 759.3 C24 757.7 20 757.5 16.9 759 Z" fill="url(#gB)"/>
<path d="M30.400 751 C33.500 752.7 37 753 40.1 751.7 L38.200 760.8 C35 762.2 31.5 761.8 28.5 760 Z" fill="url(#gY)"/>
<!-- quick launch: switch windows -->
<rect x="65.5" y="745.5" width="15" height="12" fill="#123296" stroke="#a9c2ec" stroke-width="1"/>
<rect x="67.5" y="747.5" width="5.5" height="3.5" fill="#e8eef8" stroke="#5a78c0" stroke-width=".4"/>
<rect x="69.5" y="750" width="6" height="3.5" fill="#e8eef8" stroke="#5a78c0" stroke-width=".4"/>
<rect x="71.5" y="752.5" width="6.5" height="3.8" fill="#f4f8fc" stroke="#5a78c0" stroke-width=".4"/>
<!-- show desktop -->
<rect x="88.5" y="745.5" width="15.2" height="12" fill="url(#gDesk)" stroke="#b4c8ec" stroke-width="1"/>
<rect x="89.2" y="755.2" width="13.8" height="1.8" fill="#1a2230"/>
<rect x="89.6" y="755.4" width="2.5" height="1.4" fill="#4a9a50"/>
<!-- chrome -->
<g>
 <circle cx="119.1" cy="751" r="7.3" fill="#e8c21c"/>
 <path d="M119.100 751 L112.780 747.35 A7.300 7.3 0 0 1 125.42 747.35 Z" fill="#d8382c"/>
 <path d="M119.100 751 L112.780 747.35 A7.300 7.3 0 0 0 119.1 758.3 Z" fill="#3c9c3c"/>
 <path d="M112.780 747.35 A7.300 7.3 0 0 1 125.42 747.35 L119.100 747.7 Z" fill="#d8382c"/>
 <circle cx="119.1" cy="751" r="3.4" fill="#f4f4f4"/>
 <circle cx="119.1" cy="751" r="2.6" fill="#3a78d0"/>
</g>
<!-- chevrons -->
<path d="M145.200 743 L146.800 743 L149 745.4 L146.800 747.8 L145.200 747.8 L147.300 745.4 Z M149.200 743 L150.800 743 L153 745.4 L150.800 747.8 L149.200 747.8 L151.300 745.4 Z" fill="#fff"/>
<!-- sketchup icon on task button -->
<g transform="translate(171 742.6)">
 <polygon points="1.9,7.6 7.4,3 10.4,5.6 6.5,9.9" fill="#f3b877" stroke="#1a1410" stroke-width=".5"/>
 <polygon points="1.9,7.6 6.5,9.9 6,13.6 2.3,12.5" fill="#f5f3ee" stroke="#2a2420" stroke-width=".4"/>
 <polygon points="6.5,9.9 10.4,5.6 10.2,8.6 6,13.6" fill="#c98a58"/>
 <path d="M13.700 4.4 L5.300 15.1" stroke="#d53c25" stroke-width="2.5" fill="none"/>
 <path d="M14.300 3.6 L13.300 4.9" stroke="#f6d8d0" stroke-width="2.3" fill="none"/>
 <path d="M5.700 14.6 L4.300 16.3" stroke="#f3b3a3" stroke-width="1.9" fill="none"/>
</g>
<!-- tray: red shield -->
<path d="M1167 741.6 C1169 742.9 1171.5 743.3 1173.6 743.2 C1173.800 749 1172 754 1167 756.6 C1162 754 1160.2 749 1160.4 743.2 C1162.500 743.3 1165 742.9 1167 741.6 Z" fill="#d42424" stroke="#e8e8e8" stroke-width="1.2"/>
<path d="M1164.200 746.3 L1169.800 752 M1169.800 746.3 L1164.200 752" stroke="#fff" stroke-width="1.7"/>
<!-- adobe -->
<rect x="1178.5" y="744" width="11" height="11" fill="#c8100c"/>
<path d="M1180 753.5 C1183 751 1185 747.5 1184.5 745.2 C1183.500 746 1184.5 750.5 1189 752 C1186 751 1182 752 1180 753.5 Z" fill="none" stroke="#fff" stroke-width=".9"/>
<circle cx="1188.8" cy="745.5" r="2.4" fill="#f4a020" stroke="#fff" stroke-width=".7"/>
<!-- signal -->
<path d="M1195.300 741.3 L1201.300 741.3 L1198.600 744.6 L1198.600 756.5 L1197.800 756.5 L1197.800 744.6 Z" fill="#d8d8d8" stroke="#aaa" stroke-width=".4"/>
<rect x="1199.8" y="751.5" width="2.4" height="5" fill="#5ce05c"/>
<rect x="1203.3" y="747" width="2.4" height="9.5" fill="#5ce05c"/>
<rect x="1206.8" y="741.8" width="2.6" height="14.7" fill="#5ce05c"/>
<!-- pink tree -->
<circle cx="1217" cy="746.5" r="3.4" fill="#f0a0b4"/><circle cx="1224.5" cy="746.5" r="3.4" fill="#f0a0b4"/><circle cx="1220.8" cy="744.2" r="3.4" fill="#f4b0c0"/>
<circle cx="1220.8" cy="748.3" r="2.7" fill="#d86c88"/>
<path d="M1216.500 756.3 C1216.500 752 1219 750.5 1220.8 750.5 C1222.600 750.5 1225 752 1225 756.3 L1223.300 756.3 C1223.300 753.5 1222 752.3 1220.8 752.3 C1219.500 752.3 1218.2 753.5 1218.2 756.3 Z" fill="#e8e0d8"/>
<rect x="1215.5" y="755.5" width="10.6" height="1.3" fill="#d0c8c0"/>
<!-- "10" screen -->
<rect x="1231.8" y="741.8" width="14.2" height="11.4" fill="#2a30c0" stroke="#d8dcf8" stroke-width="1"/>
<text x="1238.9" y="751" text-anchor="middle" font-family="'Liberation Sans',sans-serif" font-weight="bold" font-size="9.5" fill="#e8ecff">10</text>
<path d="M1232 756 L1237.500 756 L1237.500 754 L1240.500 754 L1240.500 756 L1246 756" fill="none" stroke="#d8dcf8" stroke-width="1.3"/>
<!-- power -->
<rect x="1265.5" y="743.5" width="8" height="12.6" rx="1" fill="#a8e0a0" stroke="#f0f0f0" stroke-width="1.1"/>
<rect x="1267.8" y="741.8" width="3.4" height="1.8" fill="#f0f0f0"/>
<path d="M1261.800 742 L1261.800 744.8 M1265 742 L1265 744.8" stroke="#f4e8b0" stroke-width="1.1"/>
<path d="M1260.500 744.8 L1266.300 744.8 L1266.300 748 C1266.300 749.8 1264.5 750.3 1264.3 751.3 L1264.300 756 L1262.500 756 L1262.500 751.3 C1262.300 750.3 1260.5 749.8 1260.5 748 Z" fill="#f8f8f4" stroke="#b0b0a0" stroke-width=".3"/>
<!-- network -->
<rect x="1283" y="742" width="8.5" height="7" fill="#2a62c0" stroke="#e4ecf8" stroke-width="1"/>
<rect x="1278.5" y="745.5" width="8.5" height="7.2" fill="#2a62c0" stroke="#e4ecf8" stroke-width="1"/>
<path d="M1280.500 755.8 L1285.500 755.8 M1283 753 L1283 755.5" stroke="#e4ecf8" stroke-width="1.1"/>
<circle cx="1288.3" cy="753.5" r="3.4" fill="#2a8ae0"/>
<path d="M1286.300 752 C1287.500 751 1289 751.5 1289.5 752.8 C1289 754.5 1287.5 755 1286.8 754 Z" fill="#48c048"/>
<!-- volume -->
<path d="M1296 746.5 L1298.500 746.5 L1302.300 742 L1302.300 756.3 L1298.500 752 L1296 752 Z" fill="#f4f4f4" stroke="#b8b8b8" stroke-width=".4"/>
<path d="M1304.500 747.2 C1305.600 748.3 1305.6 750.2 1304.5 751.3 M1306.600 745.2 C1308.800 747.4 1308.8 751.2 1306.6 753.3 M1308.700 743.2 C1311.800 746.4 1311.8 752.2 1308.7 755.3" fill="none" stroke="#40a868" stroke-width="1.1"/>
</svg>

</body>
</html>
